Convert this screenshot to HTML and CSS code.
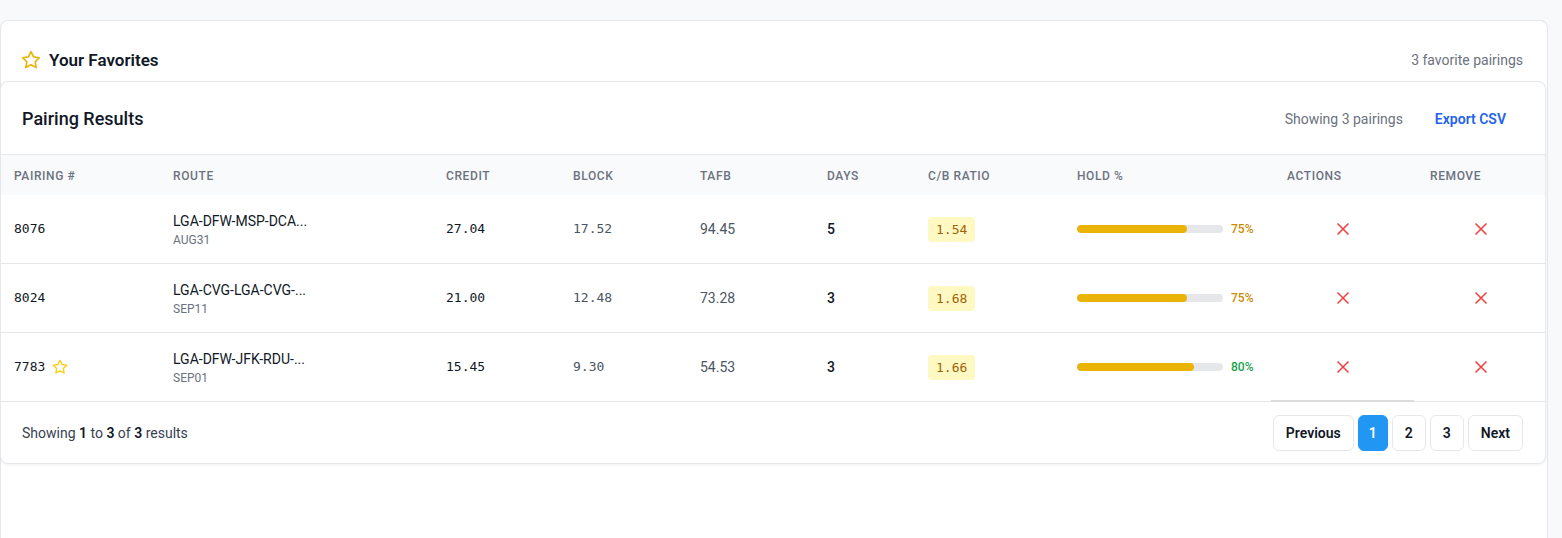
FILE: index.html
```html
<!DOCTYPE html>
<html lang="en">
<head>
<meta charset="utf-8">
<title>Your Favorites</title>
<link rel="stylesheet" href="styles.css">
</head>
<body>
<section class="fav-card">
  <header class="fav-header">
    <div class="fav-title">
      <svg class="icon-star" viewBox="0 0 24 24" fill="none" stroke="currentColor" stroke-width="2" stroke-linecap="round" stroke-linejoin="round"><polygon points="12 2 15.09 8.26 22 9.27 17 14.14 18.18 21.02 12 17.77 5.82 21.02 7 14.14 2 9.27 8.91 8.26 12 2"/></svg>
      <h2>Your Favorites</h2>
    </div>
    <span class="fav-count">3 favorite pairings</span>
  </header>

  <div class="results-card">
    <div class="results-header">
      <h3>Pairing Results</h3>
      <div class="results-tools">
        <span class="muted">Showing 3 pairings</span>
        <button class="export-btn" type="button">Export CSV</button>
      </div>
    </div>

    <div class="table-wrap">
      <div class="grid-row head-row">
        <div class="cell">Pairing #</div>
        <div class="cell">Route</div>
        <div class="cell">Credit</div>
        <div class="cell">Block</div>
        <div class="cell">TAFB</div>
        <div class="cell">Days</div>
        <div class="cell">C/B Ratio</div>
        <div class="cell">Hold %</div>
        <div class="cell">Actions</div>
        <div class="cell">Remove</div>
      </div>

      <div class="grid-row body-row">
        <div class="cell pairing"><span class="mono">8076</span></div>
        <div class="cell route"><div class="route-main">LGA-DFW-MSP-DCA...</div><div class="route-date">AUG31</div></div>
        <div class="cell mono credit">27.04</div>
        <div class="cell mono block">17.52</div>
        <div class="cell tafb">94.45</div>
        <div class="cell days">5</div>
        <div class="cell"><span class="badge">1.54</span></div>
        <div class="cell hold"><div class="track"><div class="fill" style="width:75%"></div></div><span class="pct pct-mid">75%</span></div>
        <div class="cell center action"><svg class="icon-x" viewBox="0 0 24 24" fill="none" stroke="currentColor" stroke-width="2" stroke-linecap="round" stroke-linejoin="round"><path d="M18 6 6 18"/><path d="m6 6 12 12"/></svg></div>
        <div class="cell center"><svg class="icon-x" viewBox="0 0 24 24" fill="none" stroke="currentColor" stroke-width="2" stroke-linecap="round" stroke-linejoin="round"><path d="M18 6 6 18"/><path d="m6 6 12 12"/></svg></div>
      </div>

      <div class="grid-row body-row">
        <div class="cell pairing"><span class="mono">8024</span></div>
        <div class="cell route"><div class="route-main">LGA-CVG-LGA-CVG-...</div><div class="route-date">SEP11</div></div>
        <div class="cell mono credit">21.00</div>
        <div class="cell mono block">12.48</div>
        <div class="cell tafb">73.28</div>
        <div class="cell days">3</div>
        <div class="cell"><span class="badge">1.68</span></div>
        <div class="cell hold"><div class="track"><div class="fill" style="width:75%"></div></div><span class="pct pct-mid">75%</span></div>
        <div class="cell center action"><svg class="icon-x" viewBox="0 0 24 24" fill="none" stroke="currentColor" stroke-width="2" stroke-linecap="round" stroke-linejoin="round"><path d="M18 6 6 18"/><path d="m6 6 12 12"/></svg></div>
        <div class="cell center"><svg class="icon-x" viewBox="0 0 24 24" fill="none" stroke="currentColor" stroke-width="2" stroke-linecap="round" stroke-linejoin="round"><path d="M18 6 6 18"/><path d="m6 6 12 12"/></svg></div>
      </div>

      <div class="grid-row body-row">
        <div class="cell pairing"><span class="mono">7783</span><svg class="icon-star-sm" viewBox="0 0 24 24" fill="none" stroke="currentColor" stroke-width="2" stroke-linecap="round" stroke-linejoin="round"><polygon points="12 2 15.09 8.26 22 9.27 17 14.14 18.18 21.02 12 17.77 5.82 21.02 7 14.14 2 9.27 8.91 8.26 12 2"/></svg></div>
        <div class="cell route"><div class="route-main">LGA-DFW-JFK-RDU-...</div><div class="route-date">SEP01</div></div>
        <div class="cell mono credit">15.45</div>
        <div class="cell mono block">9.30</div>
        <div class="cell tafb">54.53</div>
        <div class="cell days">3</div>
        <div class="cell"><span class="badge">1.66</span></div>
        <div class="cell hold"><div class="track"><div class="fill" style="width:80%"></div></div><span class="pct pct-high">80%</span></div>
        <div class="cell center action"><svg class="icon-x" viewBox="0 0 24 24" fill="none" stroke="currentColor" stroke-width="2" stroke-linecap="round" stroke-linejoin="round"><path d="M18 6 6 18"/><path d="m6 6 12 12"/></svg></div>
        <div class="cell center"><svg class="icon-x" viewBox="0 0 24 24" fill="none" stroke="currentColor" stroke-width="2" stroke-linecap="round" stroke-linejoin="round"><path d="M18 6 6 18"/><path d="m6 6 12 12"/></svg></div>
      </div>
      <div class="scroll-thumb"></div>
    </div>

    <div class="results-footer">
      <p class="summary">Showing <b>1</b> to <b>3</b> of <b>3</b> results</p>
      <nav class="pager">
        <button class="page-btn" type="button">Previous</button>
        <button class="page-btn active" type="button">1</button>
        <button class="page-btn" type="button">2</button>
        <button class="page-btn" type="button">3</button>
        <button class="page-btn" type="button">Next</button>
      </nav>
    </div>
  </div>
</section>
</body>
</html>
```

FILE: styles.css
```css
* { box-sizing: border-box; }

html, body {
  margin: 0;
  height: 100%;
  overflow: hidden;
}

body {
  background: #f8f9fb;
  font-family: Roboto, "Noto Sans", "Liberation Sans", Arial, sans-serif;
  font-size: 14px;
  color: #111827;
}

.fav-card {
  margin: 20px 14px 0 0;
  height: 518px;
  background: #ffffff;
  border: 1px solid #e5e7eb;
  border-bottom: 0;
  border-radius: 8px 8px 0 0;
}

.fav-header {
  display: flex;
  align-items: center;
  justify-content: space-between;
  height: 60px;
  padding: 25px 24px 7px 20px;
}

.fav-title {
  display: flex;
  align-items: center;
  gap: 8px;
}

.icon-star {
  width: 20px;
  height: 20px;
  color: #eab308;
  flex: none;
}

.fav-title h2 {
  margin: 0;
  font-size: 17px;
  line-height: 28px;
  font-weight: 600;
  color: #111827;
}

.fav-count {
  font-size: 14px;
  line-height: 20px;
  color: #6b7280;
}

.results-card {
  margin: 0 1px 0 -1px;
  background: #ffffff;
  border: 1px solid #e5e7eb;
  border-radius: 8px;
  box-shadow: 0 1px 3px rgba(0, 0, 0, 0.06);
}

.results-header {
  display: flex;
  align-items: center;
  justify-content: space-between;
  height: 73px;
  padding: 1px 23px 0 21px;
  border-bottom: 1px solid #e5e7eb;
}

.results-header h3 {
  margin: 0;
  font-size: 18px;
  line-height: 28px;
  font-weight: 500;
  color: #111827;
}

.results-tools {
  display: flex;
  align-items: center;
  gap: 16px;
}

.muted {
  color: #6b7280;
  font-size: 14px;
  line-height: 20px;
}

.export-btn {
  border: 0;
  background: transparent;
  padding: 8px 16px;
  font: inherit;
  font-size: 14px;
  line-height: 20px;
  font-weight: 600;
  color: #2563eb;
}

.table-wrap {
  position: relative;
}

.grid-row {
  display: grid;
  grid-template-columns: 159px 273px 127px 127px 127px 101px 149px 210px 143px 1fr;
  align-items: center;
}

.cell {
  padding: 0 13px;
  min-width: 0;
}

.head-row {
  height: 40px;
  padding-top: 1px;
  background: #f9fafb;
  font-size: 12px;
  font-weight: 500;
  letter-spacing: 0.05em;
  text-transform: uppercase;
  color: #6b7280;
}

.body-row {
  height: 69px;
  border-bottom: 1px solid #e5e7eb;
}

.mono {
  font-family: "DejaVu Sans Mono", "Liberation Mono", monospace;
  font-size: 13px;
  line-height: 20px;
}

.pairing {
  display: flex;
  align-items: center;
  color: #111827;
}

.icon-star-sm {
  width: 16px;
  height: 16px;
  margin-left: 7px;
  color: #facc15;
  flex: none;
}

.route {
  padding-top: 1px;
}

.route-main {
  font-size: 14px;
  line-height: 20px;
  color: #111827;
  white-space: nowrap;
}

.route-date {
  margin-top: 1px;
  font-size: 12px;
  line-height: 16px;
  color: #6b7280;
}

.credit { color: #111827; }
.block { color: #4b5563; }

.tafb {
  font-size: 14px;
  color: #4b5563;
}

.days {
  font-size: 14px;
  font-weight: 500;
  color: #111827;
}

.badge {
  display: inline-block;
  padding: 4px 8px;
  border-radius: 4px;
  background: #fef9c3;
  color: #a16207;
  font-family: "DejaVu Sans Mono", "Liberation Mono", monospace;
  font-size: 13px;
  line-height: 17px;
}

.hold {
  display: flex;
  align-items: center;
  gap: 8px;
}

.track {
  width: 146px;
  height: 8px;
  border-radius: 9999px;
  background: #e5e7eb;
  overflow: hidden;
  flex: none;
}

.fill {
  height: 100%;
  border-radius: 9999px;
  background: #eab308;
}

.pct {
  font-size: 12px;
  font-weight: 500;
}

.pct-mid { color: #ca8a04; }
.pct-high { color: #16a34a; }

.center {
  display: flex;
  justify-content: center;
}

.action {
  padding-right: 19px;
}

.icon-x {
  width: 20px;
  height: 20px;
  color: #ef4444;
}

.scroll-thumb {
  position: absolute;
  left: 1270px;
  bottom: 0;
  width: 143px;
  height: 2px;
  background: #dcdcdc;
}

.results-footer {
  display: flex;
  align-items: center;
  justify-content: space-between;
  padding: 13px 22px 12px 21px;
}

.summary {
  margin: 0;
  font-size: 14px;
  line-height: 20px;
  color: #374151;
}

.summary b {
  font-weight: 600;
  color: #111827;
}

.pager {
  display: flex;
  gap: 4px;
}

.page-btn {
  height: 36px;
  padding: 0 12px;
  border: 1px solid #e5e7eb;
  border-radius: 6px;
  background: #ffffff;
  font: inherit;
  font-size: 14px;
  font-weight: 600;
  color: #111827;
}

.page-btn.active {
  padding: 0 10px;
  background: #2196f3;
  border-color: #2196f3;
  color: #ffffff;
}
```
